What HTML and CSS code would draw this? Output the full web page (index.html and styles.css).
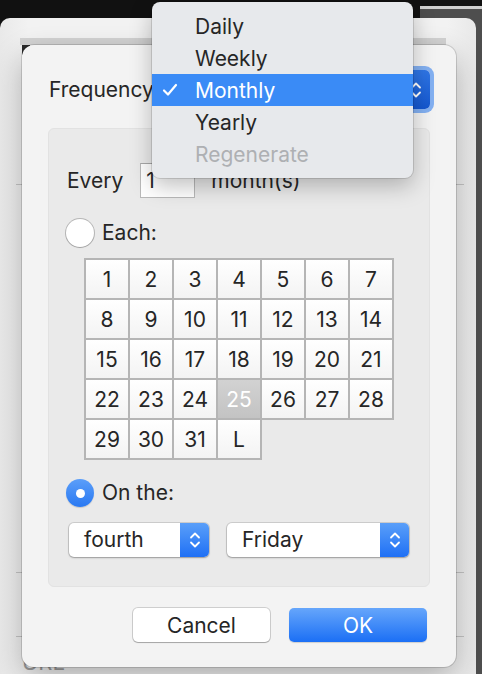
FILE: index.html
```html
<!DOCTYPE html>
<html>
<head>
<meta charset="utf-8">
<link rel="stylesheet" href="styles.css">
</head>
<body>
<div class="rightwin"></div>
<div class="backwin">
  <div class="band"></div>
  <div class="corner"></div>
  <div class="brow r1"></div>
  <div class="brow r2"></div>
  <div class="brow r3"></div>
  <div class="urltext">URL</div>
</div>

<div class="dialog">
  <div class="freq-row">
    <span class="label">Frequency:</span>
    <div class="popup freq-popup">
      <span class="popup-text"></span>
      <span class="popup-arrows dark">
        <svg width="12" height="18" viewBox="0 0 12 18"><path d="M2 6.5 L6 2.5 L10 6.5 M2 11.5 L6 15.5 L10 11.5" fill="none" stroke="#fff" stroke-width="1.8" stroke-linecap="round" stroke-linejoin="round"/></svg>
      </span>
    </div>
  </div>

  <div class="group">
    <div class="every-row">
      <span class="label">Every</span>
      <div class="field">1</div>
      <span class="label">month(s)</span>
    </div>

    <div class="radio-row each-row">
      <span class="radio"></span>
      <span class="label">Each:</span>
    </div>

    <div class="days">
      <div class="day">1</div><div class="day">2</div><div class="day">3</div><div class="day">4</div><div class="day">5</div><div class="day">6</div><div class="day">7</div>
      <div class="day">8</div><div class="day">9</div><div class="day">10</div><div class="day">11</div><div class="day">12</div><div class="day">13</div><div class="day">14</div>
      <div class="day">15</div><div class="day">16</div><div class="day">17</div><div class="day">18</div><div class="day">19</div><div class="day">20</div><div class="day">21</div>
      <div class="day">22</div><div class="day">23</div><div class="day">24</div><div class="day selected">25</div><div class="day">26</div><div class="day">27</div><div class="day">28</div>
      <div class="day">29</div><div class="day">30</div><div class="day">31</div><div class="day">L</div>
    </div>

    <div class="radio-row onthe-row">
      <span class="radio on"><span class="dot"></span></span>
      <span class="label">On the:</span>
    </div>

    <div class="popups-row">
      <div class="popup small-popup p-fourth">
        <span class="popup-text">fourth</span>
        <span class="popup-arrows">
          <svg width="12" height="18" viewBox="0 0 12 18"><path d="M2 6.5 L6 2.5 L10 6.5 M2 11.5 L6 15.5 L10 11.5" fill="none" stroke="#fff" stroke-width="1.8" stroke-linecap="round" stroke-linejoin="round"/></svg>
        </span>
      </div>
      <div class="popup small-popup p-friday">
        <span class="popup-text">Friday</span>
        <span class="popup-arrows">
          <svg width="12" height="18" viewBox="0 0 12 18"><path d="M2 6.5 L6 2.5 L10 6.5 M2 11.5 L6 15.5 L10 11.5" fill="none" stroke="#fff" stroke-width="1.8" stroke-linecap="round" stroke-linejoin="round"/></svg>
        </span>
      </div>
    </div>
  </div>

  <div class="buttons">
    <button class="btn cancel">Cancel</button>
    <button class="btn ok">OK</button>
  </div>
</div>

<div class="menu">
  <div class="item"><span class="check"></span>Daily</div>
  <div class="item"><span class="check"></span>Weekly</div>
  <div class="item active"><span class="check"><svg width="16" height="14" viewBox="0 0 16 14"><path d="M2 7.5 L6 11.5 L14 2" fill="none" stroke="#fff" stroke-width="2.2" stroke-linecap="round" stroke-linejoin="round"/></svg></span>Monthly</div>
  <div class="item"><span class="check"></span>Yearly</div>
  <div class="item disabled"><span class="check"></span>Regenerate</div>
</div>
</body>
</html>
```

FILE: styles.css
```css
* { box-sizing: border-box; }
html, body { margin: 0; padding: 0; }
body {
  width: 482px;
  height: 674px;
  overflow: hidden;
  background: #111;
  position: relative;
  font-family: Inter, "Noto Sans", sans-serif;
  color: #262626;
  font-size: 21px;
}

.rightwin {
  position: absolute;
  left: 420px;
  top: 6px;
  width: 62px;
  height: 668px;
  background: linear-gradient(#cfcfcf 0, #cfcfcf 3px, #4e4e4e 3px);
}

.backwin {
  position: absolute;
  left: 0;
  top: 18px;
  width: 476px;
  height: 680px;
  background: linear-gradient(to right, #e9e9e9, #f2f2f2 6%, #f2f2f2 94%, #e8e8e8);
  border-top-left-radius: 10px;
  border-top-right-radius: 10px;
  padding-top: 20px;
  display: flex;
  flex-direction: column;
}
.band {
  height: 7px;
  margin-left: 20px;
  margin-right: 30px;
  background: #d2d2d2;
}
.corner {
  width: 8px;
  height: 10px;
  margin-left: 22px;
  background: #2a2a2a;
}
.brow {
  margin: 0 12px 0 16px;
  border-bottom: 1px solid #c4c4c4;
}
.r1 { height: 130px; }
.r2 { height: 388px; }
.r3 { height: 64px; }
.urltext {
  margin: 12px 0 0 22px;
  color: #9c9c9c;
  font-size: 22px;
  line-height: 26px;
}

.dialog {
  position: absolute;
  left: 22px;
  top: 45px;
  width: 434px;
  height: 622px;
  background: #f3f3f3;
  border-radius: 12px;
  box-shadow: 0 0 0 1px rgba(0,0,0,0.14), 0 12px 30px rgba(0,0,0,0.28);
  padding: 25px 26px 0 26px;
  display: flex;
  flex-direction: column;
}

.label { line-height: 26px; white-space: nowrap; }

.freq-row {
  display: flex;
  align-items: center;
  height: 39px;
  gap: 10px;
  padding-left: 1px;
}

.popup {
  display: flex;
  align-items: stretch;
  background: #fff;
  border-radius: 5px;
  box-shadow: 0 0 0 1px rgba(0,0,0,0.12), 0 1px 2px rgba(0,0,0,0.25);
  overflow: hidden;
}
.popup-text {
  flex: 1;
  display: flex;
  align-items: center;
  padding-left: 15px;
  line-height: 26px;
}
.popup-arrows {
  width: 29px;
  display: flex;
  align-items: center;
  justify-content: center;
  background: linear-gradient(#5a9ff9, #1f70f5);
}
.popup-arrows.dark { background: linear-gradient(#2f76e6, #1457cf); }

.freq-popup {
  flex: 1;
  height: 39px;
  box-shadow: 0 0 0 4px rgba(70, 140, 240, 0.65);
}

.group {
  margin-top: 19px;
  height: 459px;
  background: #eaeaea;
  border: 1px solid #e2e2e2;
  border-radius: 6px;
  padding: 34px 0 0 17px;
  display: flex;
  flex-direction: column;
}

.every-row {
  display: flex;
  align-items: center;
  height: 35px;
  padding-left: 1px;
}
.field {
  width: 55px;
  height: 35px;
  margin: 0 16px 0 17px;
  background: #fff;
  border: 1px solid #b9b9b9;
  border-top-color: #a8a8a8;
  padding-left: 5px;
  line-height: 33px;
}

.radio-row {
  display: flex;
  align-items: center;
  gap: 8px;
  height: 28px;
}
.each-row { margin-top: 21px; }
.onthe-row { margin-top: 19px; }

.radio {
  width: 28px;
  height: 28px;
  border-radius: 50%;
  background: #fff;
  box-shadow: 0 0 0 1px rgba(0,0,0,0.22), 0 1px 1px rgba(0,0,0,0.12);
  display: flex;
  align-items: center;
  justify-content: center;
}
.radio.on {
  background: linear-gradient(#5b9ef9, #2a79f2);
  box-shadow: 0 1px 1px rgba(0,0,0,0.15);
}
.dot {
  width: 9px;
  height: 9px;
  border-radius: 50%;
  background: #fff;
}

.days {
  margin: 11px 0 0 18px;
  padding: 2px;
  display: grid;
  grid-template-columns: repeat(7, 42px);
  grid-auto-rows: 38px;
  gap: 2px;
  width: 310px;
}
.day {
  outline: 2px solid #b5b5b5;
  background: linear-gradient(#ffffff, #f3f3f3);
  display: flex;
  align-items: center;
  justify-content: center;
  font-size: 21px;
}
.day.selected {
  background: linear-gradient(#d2d2d2, #c3c3c3);
  color: #fff;
}

.popups-row {
  display: flex;
  gap: 18px;
  margin: 16px 0 0 3px;
}
.small-popup { height: 34px; }
.p-fourth { width: 140px; }
.p-friday { width: 182px; }

.buttons {
  margin-top: 21px;
  display: flex;
  justify-content: flex-end;
  gap: 19px;
  padding-right: 3px;
}
.btn {
  height: 34px;
  border: none;
  border-radius: 5px;
  font-family: Inter, "Noto Sans", sans-serif;
  font-size: 21px;
  padding: 0;
}
.cancel {
  width: 137px;
  background: #fff;
  color: #262626;
  box-shadow: 0 0 0 1px rgba(0,0,0,0.15), 0 1px 1px rgba(0,0,0,0.2);
}
.ok {
  width: 138px;
  color: #fff;
  background: linear-gradient(#66a6fb, #1b6ff5);
  box-shadow: 0 1px 1px rgba(0,0,0,0.15);
}

.menu {
  position: absolute;
  left: 152px;
  top: 2px;
  width: 261px;
  height: 176px;
  padding: 8px 0;
  background: #e7e9ec;
  border-radius: 8px;
  box-shadow: 0 0 0 1px rgba(0,0,0,0.12), 0 8px 22px rgba(0,0,0,0.25);
}
.item {
  height: 32px;
  display: flex;
  align-items: center;
  color: #262626;
  font-size: 21px;
}
.check {
  width: 43px;
  padding-left: 10px;
  display: flex;
  align-items: center;
}
.item.active {
  background: #3a8bf6;
  color: #fff;
}
.item.disabled { color: #aeb0b3; }
```
